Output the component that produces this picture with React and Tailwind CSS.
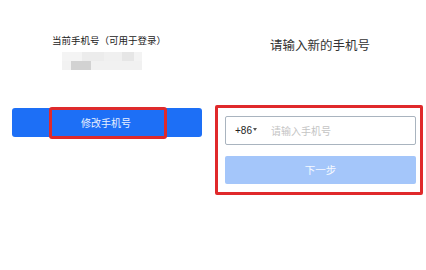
import React from "react";

export default function App() {
  const font = { fontFamily: '"Noto Sans CJK SC", "Noto Sans", sans-serif' };
  return (
    <div className="flex w-[426px] h-[270px] bg-white overflow-hidden" style={font}>
      {/* left: current phone */}
      <div className="w-[214px] flex flex-col items-center pt-[33px]">
        <div className="text-[9.5px] leading-[14px] text-[#222] ml-[4px]">当前手机号（可用于登录）</div>
        <div className="mt-[5px] mr-[10px] w-[80px] h-[18px] bg-[#f1f1f1] flex flex-col blur-[0.6px]">
          <div className="flex h-[9px]">
            <div className="w-[20px] bg-[#f4f4f4]" />
            <div className="w-[22px] bg-[#ececec]" />
            <div className="w-[18px] bg-[#f0f0f0]" />
            <div className="w-[12px] bg-[#e6e6e6]" />
            <div className="flex-1 bg-[#f3f3f3]" />
          </div>
          <div className="flex h-[9px]">
            <div className="w-[9px] bg-[#f2f2f2]" />
            <div className="w-[20px] bg-[#d2d2d2]" />
            <div className="flex-1 bg-[#f1f1f1]" />
          </div>
        </div>
        <div className="relative mt-[38px] w-[190px] h-[29px] rounded-[3px] bg-[#1d6ff6] flex items-center justify-center">
          <span className="text-[10px] text-white/90 ml-[-2px]">修改手机号</span>
          <div className="absolute left-[37px] top-[-1.5px] w-[118px] h-[32px] border-[3px] border-[#de2a2c] rounded-[3px]" />
        </div>
      </div>

      {/* right: new phone */}
      <div className="flex-1 flex flex-col items-center pt-[36px]">
        <div className="text-[12.5px] leading-[18px] text-[#333]">请输入新的手机号</div>
        <div className="self-start ml-[1px] mt-[51px] w-[208px] border-[3px] border-[#e0292b] rounded-[2px] pl-[7px] pr-[4px] pt-[8px] pb-[8px] flex flex-col gap-[11px]">
          <div className="h-[29px] border border-[#a9b4bf] rounded-[2px] flex items-center pl-[9px]">
            <span className="text-[10px] text-[#222]" style={{ fontFamily: '"Liberation Sans", "Noto Sans CJK SC", sans-serif' }}>+86</span>
            <span className="ml-[1px] mt-[-2px] w-0 h-0 border-l-[2px] border-r-[2px] border-t-[3px] border-l-transparent border-r-transparent border-t-[#555]" />
            <span className="ml-[14px] text-[10px] text-[#c4c4c4]">请输入手机号</span>
          </div>
          <div className="h-[28px] rounded-[2px] bg-[#a4c6fa] flex items-center justify-center">
            <span className="text-[10.5px] text-white/90">下一步</span>
          </div>
        </div>
      </div>
    </div>
  );
}
